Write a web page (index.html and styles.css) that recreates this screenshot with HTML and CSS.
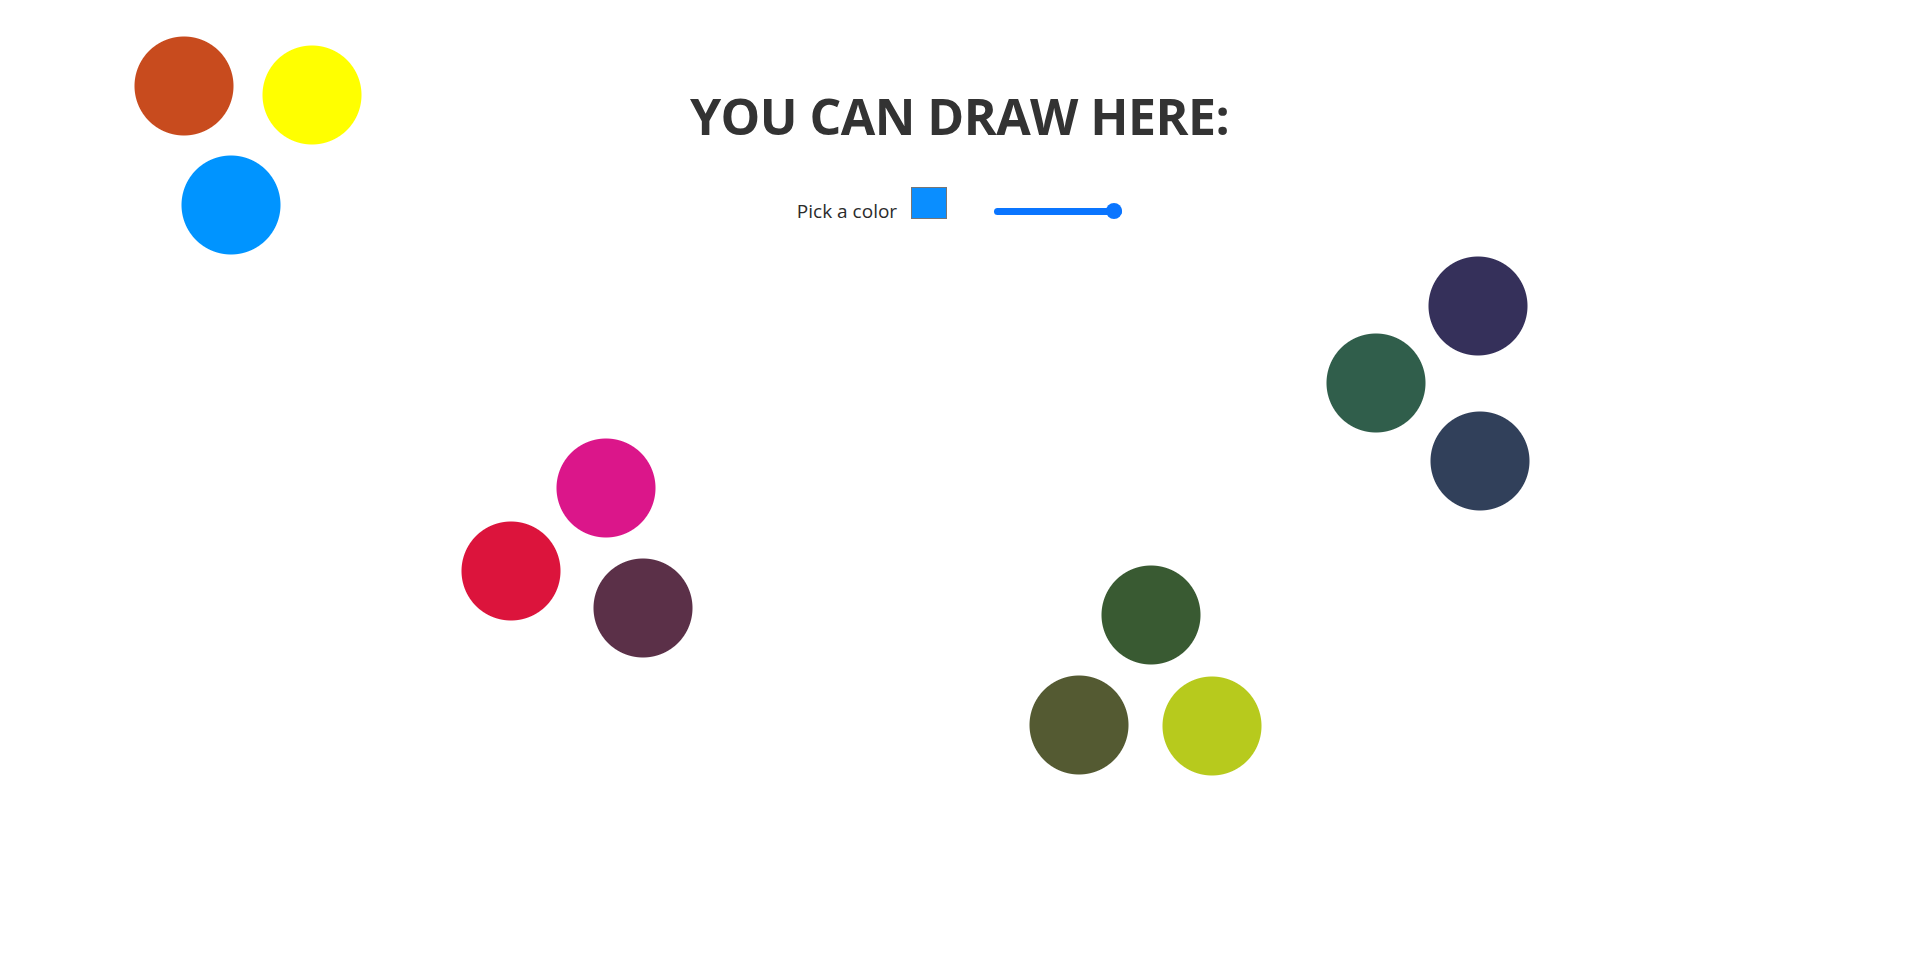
FILE: index.html
```html
<!DOCTYPE html>
<html lang="en">
<head>
<meta charset="utf-8">
<title>You can draw here</title>
<link rel="stylesheet" href="styles.css">
</head>
<body>
<main class="page">
  <h1 class="title">YOU CAN DRAW HERE:</h1>
  <div class="controls">
    <label class="label" for="color">Pick a color</label>
    <input class="swatch" id="color" type="color" value="#0a8eff">
    <input class="size" type="range" min="1" max="50" value="50">
  </div>
  <div class="canvas">
    <span class="dot" style="left:134px;top:36px;--c:#c84b1e"></span>
    <span class="dot" style="left:262px;top:45px;--c:#ffff00"></span>
    <span class="dot" style="left:181px;top:155px;--c:#0094ff"></span>
    <span class="dot" style="left:556px;top:438px;--c:#db168a"></span>
    <span class="dot" style="left:461px;top:521px;--c:#dc143c"></span>
    <span class="dot" style="left:593px;top:558px;--c:#5b3048"></span>
    <span class="dot" style="left:1101px;top:565px;--c:#395a32"></span>
    <span class="dot" style="left:1029px;top:675px;--c:#545a32"></span>
    <span class="dot" style="left:1162px;top:676px;--c:#b7ca1d"></span>
    <span class="dot" style="left:1428px;top:256px;--c:#35305a"></span>
    <span class="dot" style="left:1326px;top:333px;--c:#305e4b"></span>
    <span class="dot" style="left:1430px;top:411px;--c:#31405a"></span>
  </div>
</main>
</body>
</html>
```

FILE: styles.css
```css
* { box-sizing: border-box; }
html, body { margin: 0; padding: 0; background: #fff; }
body {
  font-family: "Open Sans", "Noto Sans", sans-serif;
  color: #333;
  overflow: hidden;
}
.page {
  position: relative;
  width: 1919px;
  height: 968px;
  padding-top: 82px;
}
.title {
  margin: 0;
  text-align: center;
  font-size: 50px;
  font-weight: 700;
  line-height: 68px;
  letter-spacing: -0.55px;
  color: #333;
}
.controls {
  margin-top: 37px;
  display: flex;
  justify-content: center;
  align-items: center;
  height: 48px;
}
.label {
  font-size: 19px;
  line-height: 27px;
  color: #2b2b2b;
  margin-right: 14px;
}
.swatch {
  -webkit-appearance: none;
  appearance: none;
  width: 36px;
  height: 32px;
  margin: 0 0 16px 0;
  padding: 0;
  border: 1px solid #767676;
  background: #0a8eff;
  cursor: pointer;
}
.swatch::-webkit-color-swatch-wrapper { padding: 0; }
.swatch::-webkit-color-swatch { border: none; }
.size {
  -webkit-appearance: none;
  appearance: none;
  width: 128px;
  height: 16px;
  margin: 0 0 0 47px;
  padding: 0;
  background: transparent;
}
.size::-webkit-slider-runnable-track {
  height: 7px;
  border-radius: 4px;
  background: #0a75ff;
}
.size::-webkit-slider-thumb {
  -webkit-appearance: none;
  appearance: none;
  width: 16px;
  height: 16px;
  margin-top: -4.5px;
  border-radius: 50%;
  background: #0a75ff;
  border: none;
}
.canvas {
  position: absolute;
  left: 0;
  top: 0;
  width: 1919px;
  height: 968px;
  pointer-events: none;
}
.dot {
  position: absolute;
  width: 100px;
  height: 100px;
  background: radial-gradient(circle closest-side, var(--c) calc(100% - 1px), transparent 100%);
}
```
